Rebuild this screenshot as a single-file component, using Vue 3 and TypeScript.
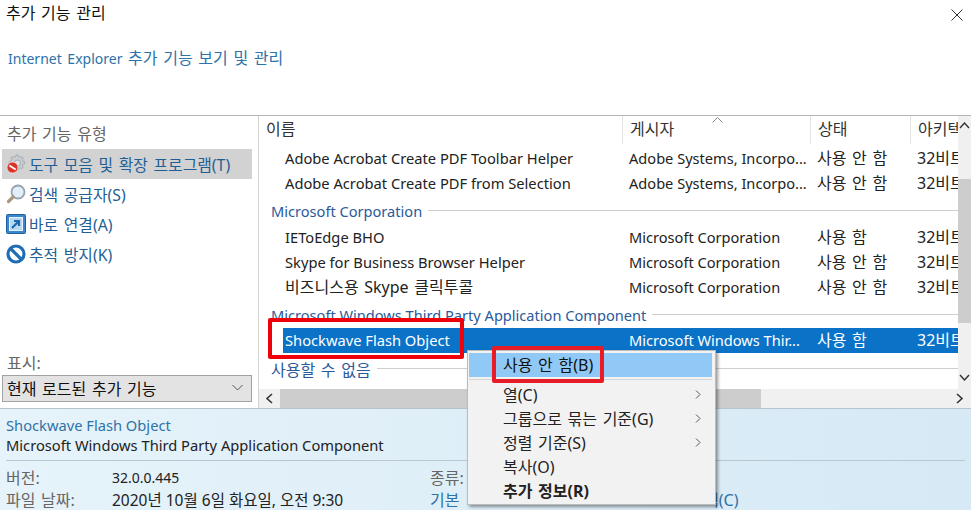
<script setup lang="ts">
interface AddonRow {
  kind: 'group' | 'row'
  name: string
  publisher?: string
  status?: string
  selected?: boolean
  korean?: boolean
}

const categories = [
  { label: '도구 모음 및 확장 프로그램(T)', icon: 'gear', active: true },
  { label: '검색 공급자(S)', icon: 'search', active: false },
  { label: '바로 연결(A)', icon: 'accel', active: false },
  { label: '추적 방지(K)', icon: 'block', active: false },
]

const rows: AddonRow[] = [
  { kind: 'row', name: 'Adobe Acrobat Create PDF Toolbar Helper', publisher: 'Adobe Systems, Incorpo...', status: '사용 안 함' },
  { kind: 'row', name: 'Adobe Acrobat Create PDF from Selection', publisher: 'Adobe Systems, Incorpo...', status: '사용 안 함' },
  { kind: 'group', name: 'Microsoft Corporation' },
  { kind: 'row', name: 'IEToEdge BHO', publisher: 'Microsoft Corporation', status: '사용 함' },
  { kind: 'row', name: 'Skype for Business Browser Helper', publisher: 'Microsoft Corporation', status: '사용 안 함' },
  { kind: 'row', name: '비즈니스용 Skype 클릭투콜', publisher: 'Microsoft Corporation', status: '사용 안 함', korean: true },
  { kind: 'group', name: 'Microsoft Windows Third Party Application Component' },
  { kind: 'row', name: 'Shockwave Flash Object', publisher: 'Microsoft Windows Thir...', status: '사용 함', selected: true },
  { kind: 'group', name: '사용할 수 없음', korean: true },
]

const menuItems = [
  { label: '사용 안 함(B)', hot: true },
  { label: '열(C)', sub: true },
  { label: '그룹으로 묶는 기준(G)', sub: true },
  { label: '정렬 기준(S)', sub: true },
  { label: '복사(O)' },
  { label: '추가 정보(R)', bold: true },
]
</script>

<template>
  <div class="dialog">
    <header class="top">
      <div class="title-row">
        <span class="title ko">추가 기능 관리</span>
        <svg class="close" width="12" height="12" viewBox="0 0 12 12">
          <path d="M.5.5l11 11M11.5.5l-11 11" stroke="#333" fill="none" />
        </svg>
      </div>
      <div class="subtitle">Internet Explorer <span class="ko">추가 기능 보기 및 관리</span></div>
    </header>

    <main class="middle">
      <aside class="side">
        <div class="side-head ko">추가 기능 유형</div>
        <ul class="cats">
          <li v-for="c in categories" :key="c.icon" class="cat ko" :class="{ active: c.active }">
            <svg class="cat-icon" width="20" height="20" viewBox="0 0 20 20">
              <template v-if="c.icon === 'gear'">
                <path d="M11 1.500l2 0 .6 1.800 1.700.7 1.700-.9 1.400 1.400-.9 1.700.7 1.700 1.800.6 0 2-1.800.6-.7 1.700.9 1.700-1.400 1.400-1.700-.9-1.700.7-.6 1.800-2 0-.6-1.800-1.700-.7-1.700.9-1.400-1.400.9-1.700-.7-1.700-1.800-.6 0-2 1.800-.6.7-1.700-.9-1.700 1.400-1.400 1.700.9 1.700-.7z" fill="#c9cdd1" stroke="#9aa0a6" stroke-width=".8" transform="translate(-.5 -.5) scale(.96)" />
                <circle cx="11.500" cy="9" r="3" fill="#dfe2e5" stroke="#a4a9ae" />
                <circle cx="6.500" cy="13.500" r="5.500" fill="#d8352a" stroke="#fff" stroke-width=".6" />
                <path d="M3.300 11.500l6.400 4" stroke="#fff" stroke-width="1.800" />
              </template>
              <template v-else-if="c.icon === 'search'">
                <circle cx="12" cy="8" r="6.500" fill="#e2effa" stroke="#97a3ad" stroke-width="1.800" />
                <path d="M7.200 12.800L2.500 17.500" stroke="#a8977c" stroke-width="3.200" stroke-linecap="round" />
              </template>
              <template v-else-if="c.icon === 'accel'">
                <rect x=".5" y=".5" width="19" height="19" rx="1" fill="#3a86cc" stroke="#1e5f9e" />
                <rect x="3.500" y="3.500" width="13" height="13" fill="#b9d9f2" stroke="#e8f3fb" />
                <path d="M6 14l6-6M8 7h5v5" stroke="#1e69ad" stroke-width="2.200" fill="none" />
              </template>
              <template v-else>
                <circle cx="10" cy="10" r="8" fill="#fff" stroke="#1f6db5" stroke-width="3.200" />
                <path d="M4.500 4.500l11 11" stroke="#1f6db5" stroke-width="3.200" />
              </template>
            </svg>
            <span>{{ c.label }}</span>
          </li>
        </ul>
        <div class="show-label ko">표시:</div>
        <div class="combo">
          <span class="ko">현재 로드된 추가 기능</span>
          <svg width="11" height="7" viewBox="0 0 11 7">
            <path d="M.5 1l5 5 5-5" stroke="#555" fill="none" />
          </svg>
        </div>
      </aside>

      <section class="list">
        <div class="list-top">
          <div class="list-body">
            <div class="head grid ko">
              <span class="cell">이름</span>
              <span class="cell sep">게시자<svg class="sort" width="11" height="6" viewBox="0 0 11 6"><path d="M.5 5.500l5-5 5 5" stroke="#888" fill="none" /></svg></span>
              <span class="cell sep">상태</span>
              <span class="cell sep">아키텍처</span>
            </div>
            <div class="rows">
              <template v-for="r in rows" :key="r.name">
                <div v-if="r.kind === 'group'" class="group">
                  <span :class="{ ko: r.korean }">{{ r.name }}</span>
                  <i></i>
                </div>
                <div v-else class="grid row" :class="{ selected: r.selected }">
                  <span class="name" :class="{ ko: r.korean }">{{ r.name }}</span>
                  <span class="pub">{{ r.publisher }}</span>
                  <span class="ko">{{ r.status }}</span>
                  <span class="ko arch">32비트</span>
                </div>
              </template>
            </div>
          </div>
          <div class="vbar">
            <svg width="11" height="7" viewBox="0 0 11 7"><path d="M1 6l4.500-5L10 6" stroke="#333" stroke-width="1.400" fill="none" /></svg>
            <div class="vthumb"></div>
            <svg width="11" height="7" viewBox="0 0 11 7"><path d="M1 1l4.500 5L10 1" stroke="#333" stroke-width="1.400" fill="none" /></svg>
          </div>
        </div>
        <div class="hbar">
          <svg width="9" height="11" viewBox="0 0 9 11"><path d="M7 1L2 5.500 7 10" stroke="#333" stroke-width="1.600" fill="none" /></svg>
          <div class="hthumb"></div>
          <svg width="9" height="11" viewBox="0 0 9 11"><path d="M2 1l5 4.500L2 10" stroke="#333" stroke-width="1.600" fill="none" /></svg>
        </div>
      </section>
    </main>

    <footer class="details">
      <div class="detail-name">Shockwave Flash Object</div>
      <div class="detail-pub">Microsoft Windows Third Party Application Component</div>
      <div class="facts">
        <span class="key ko">버전:</span>
        <span class="version">32.0.0.445</span>
        <span class="key ko">종류:</span>
        <span></span>
        <span class="key ko">파일 날짜:</span>
        <span class="date">2020년 10월 6일 화요일, 오전 9:30</span>
        <span class="link ko">기본</span>
        <span class="link tail ko">색(C)</span>
      </div>
    </footer>

    <div class="menu">
      <template v-for="m in menuItems" :key="m.label">
        <div class="menu-item ko" :class="{ hot: m.hot, bold: m.bold }">
          <span>{{ m.label }}</span>
          <svg v-if="m.sub" width="6" height="9" viewBox="0 0 6 9"><path d="M1 .5l4 4-4 4" stroke="#555" fill="none" /></svg>
        </div>
        <div v-if="m.hot" class="menu-sep"></div>
      </template>
    </div>

    <div class="mark mark-row"></div>
    <div class="mark mark-menu"></div>
  </div>
</template>

<style>
html, body { margin: 0; background: #fff; overflow: hidden; }
</style>

<style scoped>
.dialog {
  position: relative;
  width: 971px;
  height: 510px;
  overflow: hidden;
  display: flex;
  flex-direction: column;
  font-family: "Noto Sans", "Noto Sans CJK KR", sans-serif;
  font-size: 14.7px;
  color: #222;
  background: #fff;
}
.ko { font-size: 16px; word-spacing: 1.5px; }
.top {
  height: 116px;
  flex: none;
  box-sizing: border-box;
  border-bottom: 1px solid #b4b4b4;
  padding: 1px 8px 0 6px;
}
.title-row {
  display: flex;
  justify-content: space-between;
  align-items: center;
  height: 22px;
}
.title { color: #111; }
.close { margin-top: 5px; }
.subtitle {
  margin: 23px 0 0 2px;
  color: #2d72a8;
  line-height: 24px;
  font-size: 14px;
  word-spacing: 2px;
}
.middle {
  flex: none;
  height: 292px;
  display: flex;
  overflow: hidden;
}
.side {
  width: 259px;
  flex: none;
  box-sizing: border-box;
  border-right: 1px solid #d4d4d4;
  display: flex;
  flex-direction: column;
  padding: 0 6px 0 2px;
}
.side-head {
  padding: 5px 0 0 5px;
  height: 33px;
  box-sizing: border-box;
  color: #666;
}
.cats { list-style: none; margin: 0; padding: 0; flex: 1; }
.cat {
  height: 30px;
  display: flex;
  align-items: center;
  color: #1f5f96;
  white-space: nowrap;
  font-size: 15.85px;
}
.cat.active { background: #d2d2d2; }
.cat-icon { flex: none; margin-left: 4px; }
.cat span { margin-left: 3px; }
.show-label { color: #666; margin: 0 0 0 5px; line-height: 24px; }
.combo {
  height: 27px;
  margin-bottom: 6px;
  box-sizing: border-box;
  border: 1px solid #a2a2a2;
  background: #e3e3e3;
  display: flex;
  align-items: center;
  justify-content: space-between;
  padding: 0 8px 2px 4px;
  color: #111;
}
.list { flex: 1; min-width: 0; display: flex; flex-direction: column; }
.list-top { flex: 1; min-height: 0; display: flex; }
.list-body { flex: 1; min-width: 0; display: flex; flex-direction: column; overflow: hidden; }
.grid {
  display: grid;
  grid-template-columns: 363px 188px 100px 48px;
  white-space: nowrap;
}
.head { height: 28px; flex: none; color: #333; align-items: stretch; }
.cell {
  position: relative;
  padding: 0 0 0 7px;
  box-sizing: border-box;
  overflow: hidden;
  line-height: 26px;
}
.cell.sep { border-left: 1px solid #e3e3e3; }
.sort { position: absolute; left: 89px; top: 1px; }
.rows { flex: 1; overflow: hidden; padding-top: 2px; }
.row { height: 25px; line-height: 25px; }
.row > span { padding-left: 7px; overflow: hidden; }
.row > .name { padding-left: 26px; }
.pub { font-size: 14.6px; }
.arch { word-spacing: 0; }
.group {
  height: 29px;
  display: flex;
  align-items: center;
  gap: 6px;
  padding-left: 12px;
  color: #2a5a9a;
  white-space: nowrap;
  font-size: 14.6px;
}
.group .ko { font-size: 16px; }
.group i { flex: 1; height: 1px; background: #cfcfcf; }
.row.selected {
  color: #fff;
  margin: -1px 0 1px;
  background: linear-gradient(to right, #fff 24px, #0a73c8 24px);
}
.hbar {
  height: 19px;
  flex: none;
  background: #f0f0f0;
  display: flex;
  align-items: center;
  justify-content: space-between;
  padding: 0 7px 0 6px;
}
.hthumb { width: 481px; height: 19px; background: #cdcdcd; margin: 0 auto 0 6px; }
.vbar {
  width: 13px;
  flex: none;
  background: #f0f0f0;
  display: flex;
  flex-direction: column;
  align-items: center;
  padding: 6px 0 8px;
  box-sizing: border-box;
}
.vthumb { width: 13px; height: 144px; background: #cdcdcd; margin: 50px 0 auto; }
.details {
  flex: 1;
  box-sizing: border-box;
  border-top: 1px solid #b8c4cc;
  background: linear-gradient(to right, #e6f3fa, #d6e9f5);
  padding: 6px 6px 0;
}
.detail-name { color: #2d72a8; line-height: 21px; }
.detail-pub { color: #222; line-height: 19px; padding-bottom: 5px; border-bottom: 1px solid #b9c7d0; }
.facts {
  display: grid;
  grid-template-columns: 106px 318px 60px 1fr;
  grid-auto-rows: 22px;
  padding-top: 6px;
  line-height: 22px;
  white-space: nowrap;
}
.key { color: #666; }
.version { font-size: 14px; }
.date { font-size: 15.5px; }
.link { color: #2d72a8; }
.tail { padding-left: 214px; }
.menu {
  position: absolute;
  left: 467px;
  top: 350px;
  width: 249px;
  box-sizing: border-box;
  padding: 2px 3px 1px 1px;
  background: #f2f2f2;
  border: 1px solid #bcbcbc;
  box-shadow: 2px 2px 3px rgba(0, 0, 0, 0.4);
  color: #222;
}
.menu-item {
  height: 24px;
  box-sizing: border-box;
  display: flex;
  align-items: center;
  justify-content: space-between;
  padding: 0 11px 2px 34px;
}
.menu-item.hot {
  background: #90c8f6;
  color: #111;
}
.menu-sep { height: 1px; background: #d4d4d4; margin: 2px 0 3px; }
.menu-item.bold { font-weight: 700; }
.mark {
  position: absolute;
  box-sizing: border-box;
}
.mark-row { border: 4px solid #f00008; border-radius: 2px; left: 268px; top: 318px; width: 196px; height: 41px; }
.mark-menu { border: 4px solid #e81c26; border-radius: 2px; left: 492px; top: 346px; width: 112px; height: 37px; }
</style>
